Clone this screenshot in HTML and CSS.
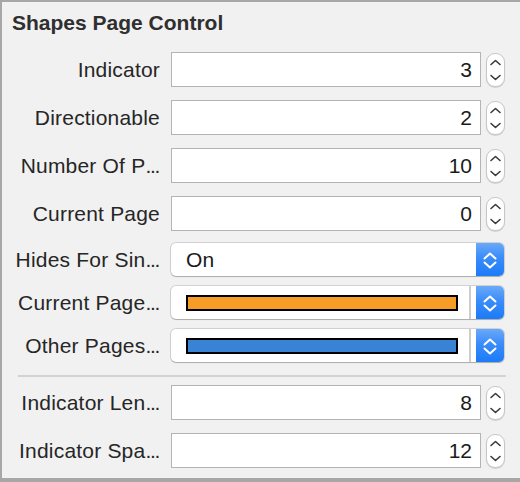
FILE: index.html
```html
<!DOCTYPE html>
<html>
<head>
<meta charset="utf-8">
<link rel="stylesheet" href="styles.css">
</head>
<body>
<div class="panel">
  <h2 class="title">Shapes Page Control</h2>
  <div class="group group-top">
    <div class="row">
      <span class="label">Indicator</span>
      <div class="field">3</div>
      <div class="stepper"><svg width="19" height="34" viewBox="0 0 19 34"><polyline points="5,11.5 9.5,7.5 14,11.5"/><polyline points="5,22.5 9.5,26.5 14,22.5"/></svg></div>
    </div>
    <div class="row">
      <span class="label">Directionable</span>
      <div class="field">2</div>
      <div class="stepper"><svg width="19" height="34" viewBox="0 0 19 34"><polyline points="5,11.5 9.5,7.5 14,11.5"/><polyline points="5,22.5 9.5,26.5 14,22.5"/></svg></div>
    </div>
    <div class="row">
      <span class="label">Number Of P<span class="ell">...</span></span>
      <div class="field">10</div>
      <div class="stepper"><svg width="19" height="34" viewBox="0 0 19 34"><polyline points="5,11.5 9.5,7.5 14,11.5"/><polyline points="5,22.5 9.5,26.5 14,22.5"/></svg></div>
    </div>
    <div class="row">
      <span class="label">Current Page</span>
      <div class="field">0</div>
      <div class="stepper"><svg width="19" height="34" viewBox="0 0 19 34"><polyline points="5,11.5 9.5,7.5 14,11.5"/><polyline points="5,22.5 9.5,26.5 14,22.5"/></svg></div>
    </div>
    <div class="row row-popup">
      <span class="label">Hides For Sin<span class="ell">...</span></span>
      <div class="popup">
        <span class="popup-value">On</span>
        <span class="popup-btn"><svg width="28" height="33" viewBox="0 0 28 33"><polyline points="8.5,15.5 14,10.5 19.5,15.5"/><polyline points="8.5,19.5 14,24.5 19.5,19.5"/></svg></span>
      </div>
    </div>
    <div class="row row-popup">
      <span class="label">Current Page<span class="ell">...</span></span>
      <div class="popup popup-color">
        <span class="swatch swatch-orange"></span>
        <span class="divider"></span>
        <span class="popup-btn"><svg width="28" height="33" viewBox="0 0 28 33"><polyline points="8.5,15.5 14,10.5 19.5,15.5"/><polyline points="8.5,19.5 14,24.5 19.5,19.5"/></svg></span>
      </div>
    </div>
    <div class="row row-popup">
      <span class="label">Other Pages<span class="ell">...</span></span>
      <div class="popup popup-color">
        <span class="swatch swatch-blue"></span>
        <span class="divider"></span>
        <span class="popup-btn"><svg width="28" height="33" viewBox="0 0 28 33"><polyline points="8.5,15.5 14,10.5 19.5,15.5"/><polyline points="8.5,19.5 14,24.5 19.5,19.5"/></svg></span>
      </div>
    </div>
  </div>
  <div class="sep"></div>
  <div class="group group-bottom">
    <div class="row">
      <span class="label">Indicator Len<span class="ell">...</span></span>
      <div class="field">8</div>
      <div class="stepper"><svg width="19" height="34" viewBox="0 0 19 34"><polyline points="5,11.5 9.5,7.5 14,11.5"/><polyline points="5,22.5 9.5,26.5 14,22.5"/></svg></div>
    </div>
    <div class="row">
      <span class="label">Indicator Spa<span class="ell">...</span></span>
      <div class="field">12</div>
      <div class="stepper"><svg width="19" height="34" viewBox="0 0 19 34"><polyline points="5,11.5 9.5,7.5 14,11.5"/><polyline points="5,22.5 9.5,26.5 14,22.5"/></svg></div>
    </div>
  </div>
</div>
</body>
</html>
```

FILE: styles.css
```css
html, body {
  margin: 0;
  padding: 0;
}
body {
  width: 520px;
  height: 482px;
  overflow: hidden;
  font-family: "Liberation Sans", Arial, sans-serif;
  background: #f1f1f1;
}
.panel {
  box-sizing: border-box;
  width: 520px;
  height: 482px;
  background: #f1f1f1;
  border-top: 2px solid #a7a7a7;
  border-left: 2px solid #a7a7a7;
  border-bottom: 4px solid #a7a7a7;
  padding-top: 8px;
}
.title {
  margin: 0 0 0 10px;
  font-size: 21px;
  line-height: 25px;
  font-weight: bold;
  color: #2f2f2f;
}
.group-top {
  margin-top: 17px;
}
.row {
  display: flex;
  align-items: center;
  height: 35px;
}
.row + .row {
  margin-top: 13px;
}
.row-popup {
  height: 33px;
}
.row + .row-popup {
  margin-top: 12px;
}
.row-popup + .row-popup {
  margin-top: 10px;
}
.label {
  width: 158px;
  margin-right: 11px;
  text-align: right;
  font-size: 21px;
  letter-spacing: 0.2px;
  color: #262626;
  white-space: nowrap;
}
.ell {
  letter-spacing: -1.3px;
  margin-right: 1px;
}
.field {
  box-sizing: border-box;
  width: 310px;
  height: 35px;
  background: #fff;
  border: 1px solid #b4b4b4;
  text-align: right;
  padding-right: 8px;
  font-size: 21px;
  line-height: 33px;
  color: #1a1a1a;
}
.stepper {
  box-sizing: border-box;
  width: 19px;
  height: 34px;
  margin-left: 5px;
  background: #fff;
  border: 1px solid #c6c6c6;
  border-radius: 9px;
  box-shadow: 0 1px 1px rgba(0,0,0,0.12);
  overflow: hidden;
}
.stepper svg {
  display: block;
  margin: -1px 0 0 -1px;
}
.stepper polyline {
  fill: none;
  stroke: #3a3a3a;
  stroke-width: 1.6;
  stroke-linecap: round;
  stroke-linejoin: round;
}
.popup {
  box-sizing: border-box;
  width: 333px;
  height: 33px;
  display: flex;
  align-items: center;
  background: #fff;
  border-radius: 5px;
  box-shadow: 0 0 0 1px rgba(0,0,0,0.13), 0 1px 1px rgba(0,0,0,0.18);
  overflow: hidden;
}
.popup-value {
  flex: 1;
  padding-left: 15px;
  font-size: 21px;
  letter-spacing: 0.2px;
  color: #1a1a1a;
}
.popup-btn {
  width: 28px;
  height: 33px;
  background: linear-gradient(#6aa9f8, #3a8cf9 45%, #1c7bf8);
}
.popup-btn svg {
  display: block;
}
.popup-btn polyline {
  fill: none;
  stroke: #fff;
  stroke-width: 2;
  stroke-linecap: round;
  stroke-linejoin: round;
}
.popup-color .swatch {
  box-sizing: border-box;
  width: 272px;
  height: 16px;
  margin-left: 15px;
  border: 2px solid #000;
}
.swatch-orange {
  background: #f89c28;
}
.swatch-blue {
  background: #3883d6;
}
.divider {
  width: 2px;
  height: 33px;
  margin-left: 11px;
  margin-right: 5px;
  background: #cdcdcd;
}
.sep {
  height: 2px;
  margin: 13px 14px 0 16px;
  background: #d2d2d2;
}
.group-bottom {
  margin-top: 8px;
}
```
